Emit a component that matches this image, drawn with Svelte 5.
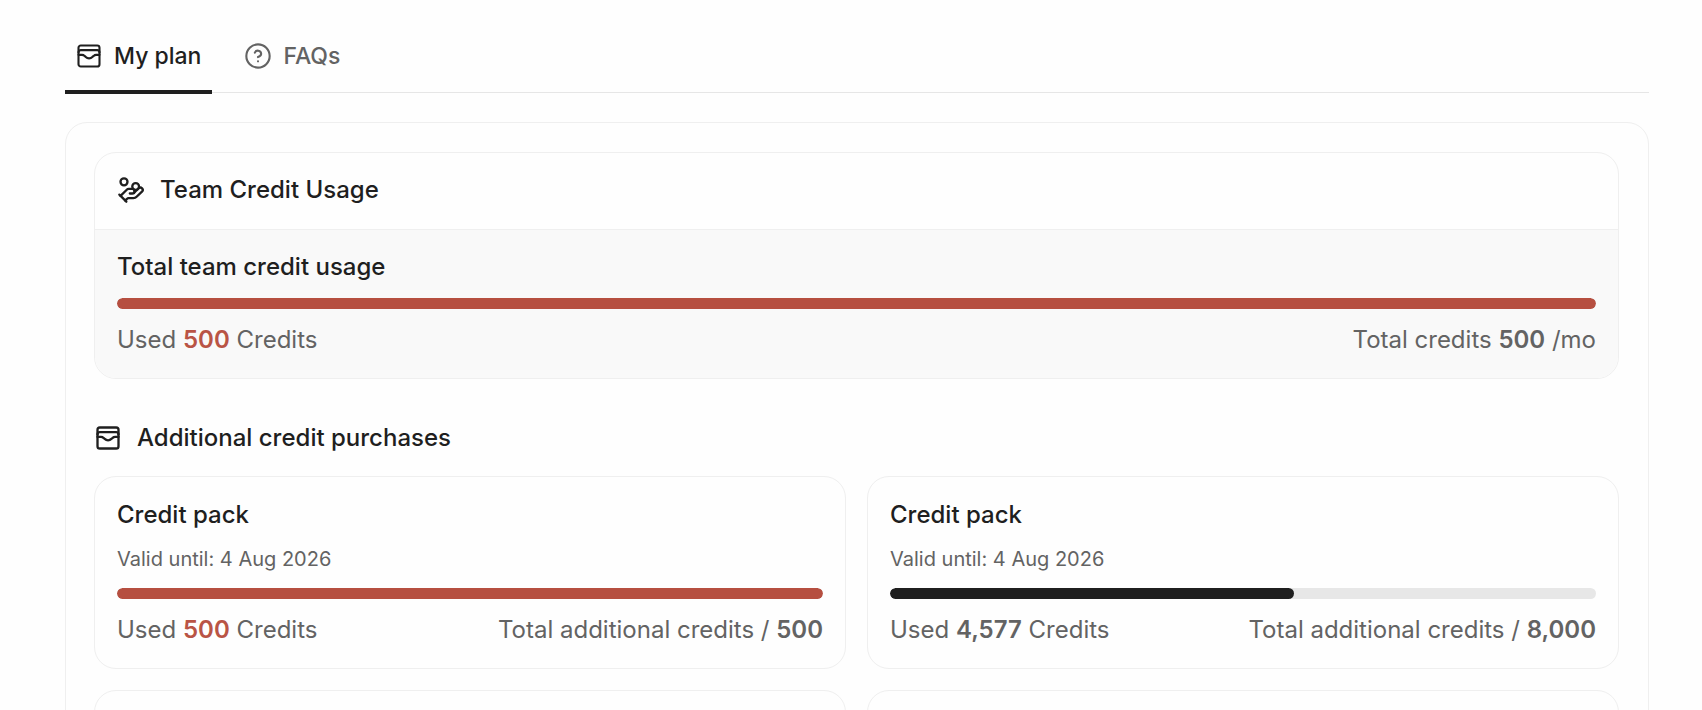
<script lang="ts">
	type Pack = { used: number; total: number; validUntil: string };

	const team = { used: 500, total: 500 };

	const packs: Pack[] = [
		{ used: 500, total: 500, validUntil: '4 Aug 2026' },
		{ used: 4577, total: 8000, validUntil: '4 Aug 2026' }
	];

	let activeTab = $state('plan');

	const format = (n: number) => n.toLocaleString('en-US');
	const percent = (used: number, total: number) => Math.min(100, (used / total) * 100);
</script>

{#snippet walletIcon()}
	<svg class="icon" viewBox="0 0 24 24" aria-hidden="true">
		<rect width="18" height="18" x="3" y="3" rx="2" />
		<path d="M3 9a2 2 0 0 1 2-2h14a2 2 0 0 1 2 2" />
		<path d="M3 11h3c.8 0 1.6.3 2.1.9l1.1.9c1.6 1.6 4.1 1.6 5.7 0l1.1-.9c.5-.5 1.3-.9 2.1-.9H21" />
	</svg>
{/snippet}

{#snippet bar(used: number, total: number, label: string)}
	<div class="bar" role="progressbar" aria-label={label} aria-valuenow={used} aria-valuemin="0" aria-valuemax={total}>
		<div class="fill" class:full={used >= total} style="width: {percent(used, total)}%"></div>
	</div>
{/snippet}

<main class="page">
	<div class="tabs" role="tablist">
		<button class="tab" role="tab" class:active={activeTab === 'plan'} aria-selected={activeTab === 'plan'} onclick={() => (activeTab = 'plan')}>
			{@render walletIcon()}
			My plan
		</button>
		<button class="tab" role="tab" class:active={activeTab === 'faqs'} aria-selected={activeTab === 'faqs'} onclick={() => (activeTab = 'faqs')}>
			<svg class="icon" viewBox="0 0 24 24" aria-hidden="true">
				<circle cx="12" cy="12" r="10" />
				<path d="M9.3 9.2a2.8 2.8 0 0 1 5.4.9c0 1.9-2.7 2.8-2.7 2.8" />
				<path d="M12 16.6h.01" />
			</svg>
			FAQs
		</button>
	</div>

	<div class="panel">
		<section class="card">
			<header class="card-header">
				<svg class="icon" viewBox="0 0 24 24" aria-hidden="true">
					<path d="M11 15h2a2 2 0 1 0 0-4h-3c-.6 0-1.1.2-1.4.6L3 17" />
					<path d="m7 21 1.6-1.4c.3-.4.8-.6 1.4-.6h4c1.1 0 2.1-.4 2.8-1.2l4.6-4.4a2 2 0 0 0-2.75-2.91l-4.2 3.9" />
					<path d="m2 16 6 6" />
					<circle cx="16" cy="9" r="2.9" />
					<circle cx="6" cy="5" r="3" />
				</svg>
				<h2>Team Credit Usage</h2>
			</header>
			<div class="card-body shaded">
				<h3>Total team credit usage</h3>
				{@render bar(team.used, team.total, 'Total team credit usage')}
				<div class="row">
					<span>Used <b class:red={team.used >= team.total}>{format(team.used)}</b> Credits</span>
					<span>Total credits <b>{format(team.total)}</b> /mo</span>
				</div>
			</div>
		</section>

		<div class="section-title">
			{@render walletIcon()}
			<h2>Additional credit purchases</h2>
		</div>

		<div class="packs">
			{#each packs as pack}
				<article class="card card-body pack">
					<h3>Credit pack</h3>
					<p class="valid">Valid until: {pack.validUntil}</p>
					{@render bar(pack.used, pack.total, 'Credit pack usage')}
					<div class="row">
						<span>Used <b class:red={pack.used >= pack.total}>{format(pack.used)}</b> Credits</span>
						<span>Total additional credits / <b>{format(pack.total)}</b></span>
					</div>
				</article>
			{/each}
			<article class="card empty"></article>
			<article class="card empty"></article>
		</div>
	</div>
</main>

<style>
	:global(body) {
		background: #fefefe;
	}
	.page {
		box-sizing: border-box;
		height: 100vh;
		overflow: hidden;
		padding: 40px 53px 0 65px;
		font-family: Inter, "Liberation Sans", sans-serif;
		font-size: 24px;
		line-height: 32px;
		color: #1f1f1f;
	}
	h2,
	h3,
	p {
		margin: 0;
		font-size: 24px;
		font-weight: 500;
	}
	.icon {
		flex: none;
		width: 28px;
		height: 28px;
		fill: none;
		stroke: currentColor;
		stroke-width: 2;
		stroke-linecap: round;
		stroke-linejoin: round;
	}
	.tabs {
		display: flex;
		gap: 22px;
		border-bottom: 1px solid #e6e6e6;
	}
	.tab {
		display: flex;
		align-items: center;
		gap: 11px;
		margin-bottom: -2px;
		padding: 0 11px 18px 10px;
		border: 0;
		border-bottom: 4px solid transparent;
		background: none;
		font: inherit;
		font-size: 23px;
		font-weight: 500;
		color: #636363;
		cursor: pointer;
	}
	.tab .icon {
		stroke-width: 1.8;
	}
	.tab.active {
		border-bottom-color: #1f1f1f;
		color: #1f1f1f;
	}
	.panel {
		margin-top: 29px;
		padding: 29px 29px 29px 28px;
		border: 1px solid #efefef;
		border-radius: 22px;
	}
	.card {
		border: 1px solid #efefef;
		border-radius: 22px;
		overflow: hidden;
	}
	.card-header,
	.section-title {
		display: flex;
		align-items: center;
		gap: 15px;
	}
	.card-header {
		padding: 21px 22px 23px;
		border-bottom: 1px solid #efefef;
	}
	.card-body {
		display: flex;
		flex-direction: column;
		gap: 15px;
		padding: 21px 22px 22px;
	}
	.pack {
		padding-top: 22px;
	}
	.shaded {
		background: #f9f9f9;
	}
	.bar {
		height: 11px;
		border-radius: 6px;
		background: #e7e7e7;
		overflow: hidden;
	}
	.fill {
		height: 100%;
		border-radius: 6px;
		background: #1f1f1f;
	}
	.fill.full {
		background: #b64f40;
	}
	.row {
		display: flex;
		justify-content: space-between;
		color: #636363;
	}
	b {
		font-weight: 600;
	}
	.red {
		color: #b95445;
	}
	.section-title {
		margin: 43px 0 22px;
	}
	.packs {
		display: grid;
		grid-template-columns: 1fr 1fr;
		gap: 21px;
	}
	.valid {
		font-size: 20px;
		font-weight: 400;
		line-height: 27px;
		color: #636363;
	}
	.empty {
		min-height: 190px;
	}
</style>
